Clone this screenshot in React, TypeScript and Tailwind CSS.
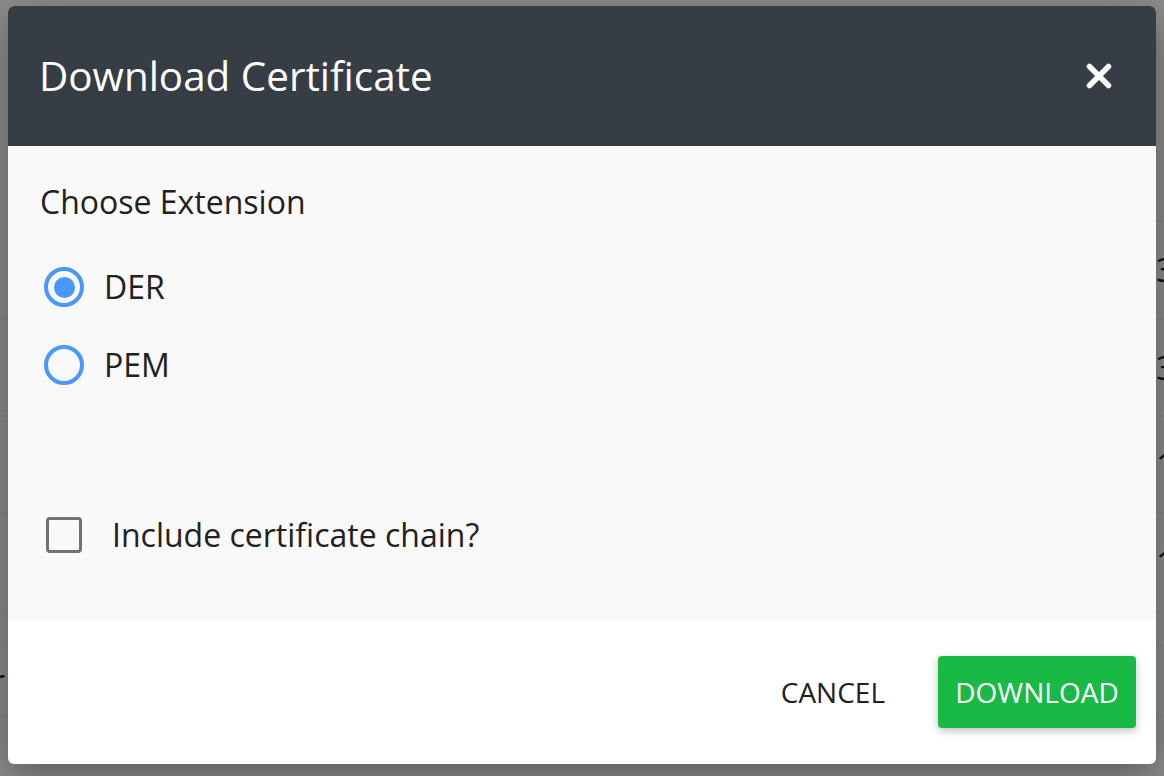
import React, { useState } from 'react';

const rows = [
  { h: 'h-[98px]', left: '', right: '3 days' },
  { h: 'h-[97px]', left: '', right: '3 days' },
  { h: 'h-[97px]', left: '', right: '1 year' },
  { h: 'h-[100px]', left: '', right: '1 year' },
  { h: 'h-[33px]', left: '', right: '' },
  { h: 'h-[70px]', left: 'Server', right: '' },
  { h: 'h-[33px]', left: '', right: '' },
];

const CloseIcon = () => (
  <svg width="26" height="26" viewBox="0 0 26 26" fill="none">
    <path d="M3.5 3.5 L22.5 22.5 M22.5 3.5 L3.5 22.5" stroke="white" strokeWidth="5.5" strokeLinecap="round" />
  </svg>
);

const Radio = ({ checked, label, onClick }: { checked: boolean; label: string; onClick: () => void }) => (
  <button onClick={onClick} className="flex items-center gap-[20px] h-[40px] ml-[4px] text-left">
    <span className="w-[40px] h-[40px] rounded-full border-[4px] border-[#4b98fd] flex items-center justify-center">
      {checked && <span className="w-[21px] h-[21px] rounded-full bg-[#4b98fd]" />}
    </span>
    <span className="text-[32px] leading-none text-[#212121]">{label}</span>
  </button>
);

export default function App() {
  const [ext, setExt] = useState('DER');
  const [chain, setChain] = useState(false);

  return (
    <div className="relative w-[1164px] h-[776px] overflow-hidden bg-white" style={{ fontFamily: '"Open Sans", "Noto Sans", sans-serif' }}>
      {/* page behind the dialog */}
      <div className="pt-[220px]">
        {rows.map((row, i) => (
          <div key={i} className={`flex items-center ${row.h} border-t-2 border-[#f4f4f4] bg-[#fdfdfd] text-[32px] text-[#222]`}>
            <div className="w-[5px] overflow-hidden flex justify-end whitespace-nowrap">{row.left}</div>
            <div className="flex-1" />
            <div className="w-[8px] whitespace-nowrap overflow-hidden">{row.right}</div>
          </div>
        ))}
      </div>

      {/* overlay */}
      <div className="absolute inset-0 bg-black/45" />

      {/* dialog */}
      <div className="absolute top-[6px] left-[8px] right-[8px] h-[758px] flex flex-col rounded-[6px] overflow-hidden bg-white shadow-[0_12px_40px_rgba(0,0,0,0.35)]">
        <div className="h-[140px] shrink-0 bg-[#373d44] flex items-center justify-between pl-[32px] pr-[44px]">
          <h1 className="text-[40.4px] text-white font-normal leading-none -ml-[1px]">Download Certificate</h1>
          <button aria-label="Close"><CloseIcon /></button>
        </div>

        <div className="h-[474px] shrink-0 bg-[#f9f9f9] px-[32px] pt-[34px]">
          <div className="text-[32px] leading-[44px] text-[#212121]">Choose Extension</div>
          <div className="mt-[43px] flex flex-col gap-[38px]">
            <Radio checked={ext === 'DER'} label="DER" onClick={() => setExt('DER')} />
            <Radio checked={ext === 'PEM'} label="PEM" onClick={() => setExt('PEM')} />
          </div>
          <button onClick={() => setChain(!chain)} className="mt-[132px] ml-[6px] flex items-center gap-[30px] h-[36px]">
            <span className="w-[36px] h-[36px] rounded-[4px] border-[3px] border-[#727272]" />
            <span className="text-[32px] leading-none text-[#212121]">Include certificate chain?</span>
          </button>
        </div>

        <div className="flex-1 flex items-center justify-end gap-[36px] pr-[20px]">
          <button className="h-[72px] px-[17px] text-[28px] text-[#212121]">CANCEL</button>
          <button className="h-[72px] w-[198px] rounded-[4px] bg-[#19b946] text-white text-[28px] shadow-[0_3px_8px_rgba(0,0,0,0.25)]">DOWNLOAD</button>
        </div>
      </div>
    </div>
  );
}
